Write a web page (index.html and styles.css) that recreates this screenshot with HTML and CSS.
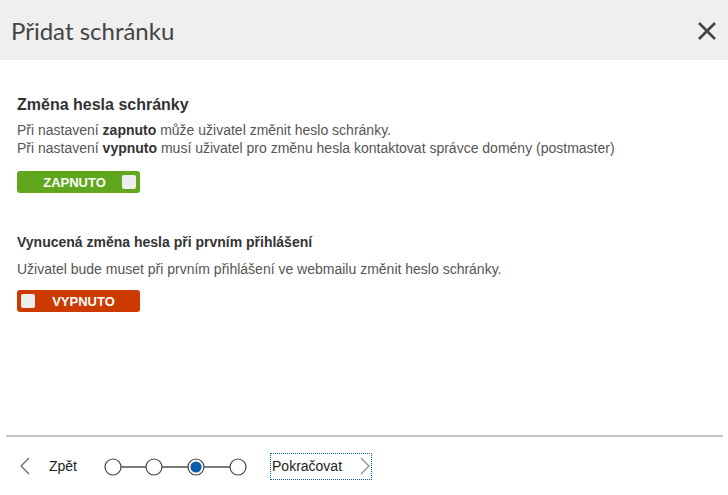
FILE: index.html
```html
<!DOCTYPE html>
<html lang="cs">
<head>
<meta charset="utf-8">
<title>Přidat schránku</title>
<link rel="stylesheet" href="styles.css">
</head>
<body>
<div class="dialog">
  <header class="head">
    <h1 class="head-title">Přidat schránku</h1>
    <button class="close" aria-label="Zavřít">
      <svg width="20" height="20" viewBox="0 0 20 20"><path d="M2 2 L18 18 M18 2 L2 18" stroke="#444" stroke-width="2.6" fill="none"/></svg>
    </button>
  </header>
  <main class="content">
    <section class="setting first">
      <h2 class="setting-title big">Změna hesla schránky</h2>
      <p class="desc">Při nastavení <b>zapnuto</b> může uživatel změnit heslo schránky.<br>Při nastavení <b>vypnuto</b> musí uživatel pro změnu hesla kontaktovat správce domény (postmaster)</p>
      <div class="toggle on"><span class="toggle-label">ZAPNUTO</span><span class="knob"></span></div>
    </section>
    <section class="setting second">
      <h2 class="setting-title">Vynucená změna hesla při prvním přihlášení</h2>
      <p class="desc">Uživatel bude muset při prvním přihlášení ve webmailu změnit heslo schránky.</p>
      <div class="toggle off"><span class="knob"></span><span class="toggle-label">VYPNUTO</span></div>
    </section>
  </main>
  <footer class="foot">
    <div class="foot-inner">
      <button class="nav back">
        <svg width="12" height="18" viewBox="0 0 12 18"><path d="M10 1 L2 9 L10 17" stroke="#666" stroke-width="1.2" fill="none"/></svg>
        <span class="nav-text">Zpět</span>
      </button>
      <svg class="steps" width="146" height="20" viewBox="0 0 146 20">
        <line x1="17" y1="10" x2="42" y2="10" stroke="#333" stroke-width="1.3"/>
        <line x1="58" y1="10" x2="84" y2="10" stroke="#333" stroke-width="1.3"/>
        <line x1="100" y1="10" x2="126" y2="10" stroke="#333" stroke-width="1.3"/>
        <circle cx="9" cy="10" r="8" fill="#fff" stroke="#444" stroke-width="1.2"/>
        <circle cx="50" cy="10" r="8" fill="#fff" stroke="#444" stroke-width="1.2"/>
        <circle cx="92" cy="10" r="8" fill="#fff" stroke="#444" stroke-width="1.2"/>
        <circle cx="92" cy="10" r="5.6" fill="#0a5cad"/>
        <circle cx="134" cy="10" r="8" fill="#fff" stroke="#444" stroke-width="1.2"/>
      </svg>
      <button class="nav next">
        <span class="nav-text">Pokračovat</span>
        <svg width="12" height="18" viewBox="0 0 12 18"><path d="M2 1 L10 9 L2 17" stroke="#888" stroke-width="1.2" fill="none"/></svg>
      </button>
    </div>
  </footer>
</div>
</body>
</html>
```
FILE: styles.css
```css
html, body {
  margin: 0;
  padding: 0;
  background: #fff;
}
.dialog {
  height: 495px;
  display: flex;
  flex-direction: column;
  font-family: "Liberation Sans", Arial, sans-serif;
  color: #444;
}
.head {
  height: 60px;
  flex: none;
  background: #efefef;
  display: flex;
  align-items: center;
  justify-content: space-between;
  padding: 0 10px 0 11px;
}
.head-title {
  margin: 0;
  font-family: Lato, "Open Sans", sans-serif;
  font-weight: 400;
  font-size: 24px;
  color: #444;
}
.close {
  border: 0;
  background: none;
  padding: 0;
  width: 22px;
  height: 22px;
  display: flex;
  align-items: center;
  justify-content: center;
  margin-top: 1px;
}
.content {
  flex: 1;
  padding: 0 17px;
}
.setting.first {
  padding-top: 35px;
}
.setting.second {
  padding-top: 40px;
}
.setting-title {
  margin: 0;
  font-size: 14px;
  font-weight: 700;
  color: #333;
  line-height: 18px;
}
.setting-title.big {
  font-size: 16px;
  line-height: 20px;
}
.desc {
  margin: 6px 0 0;
  font-size: 14px;
  line-height: 18px;
  color: #555;
}
.second .desc {
  margin-top: 9px;
}
.desc b {
  color: #333;
}
.toggle {
  margin-top: 14px;
  width: 123px;
  height: 22px;
  border-radius: 3px;
  box-sizing: border-box;
  display: flex;
  align-items: center;
  padding: 0 4px;
  color: #fff;
  font-size: 13px;
  font-weight: 700;
}
.toggle.on {
  background: #60a71d;
}
.toggle.off {
  background: #cc3a00;
  margin-top: 12px;
}
.toggle-label {
  flex: 1;
  text-align: center;
}
.toggle.on .toggle-label {
  padding-left: 6px;
}
.toggle.off .toggle-label {
  padding-right: 4px;
}
.knob {
  width: 14px;
  height: 14px;
  border-radius: 2px;
  background: #eee;
}
.foot {
  flex: none;
  height: 60px;
  padding: 0 5px 0 6px;
}
.foot-inner {
  border-top: 2px solid #c4c4c4;
  height: 58px;
  display: flex;
  align-items: center;
  padding-left: 13px;
}
.nav {
  border: 0;
  background: none;
  padding: 0;
  display: flex;
  align-items: center;
  font-family: "Liberation Sans", Arial, sans-serif;
  font-size: 14px;
  color: #222;
}
.back .nav-text {
  margin-left: 18px;
}
.steps {
  margin-left: 27px;
  margin-top: 1px;
}
.next {
  margin-left: 21px;
  outline: 1px dotted #0a5cad;
  height: 25px;
  width: 100px;
  padding-left: 1px;
  box-sizing: border-box;
}
.next .nav-text {
  margin-right: 17px;
}
```
